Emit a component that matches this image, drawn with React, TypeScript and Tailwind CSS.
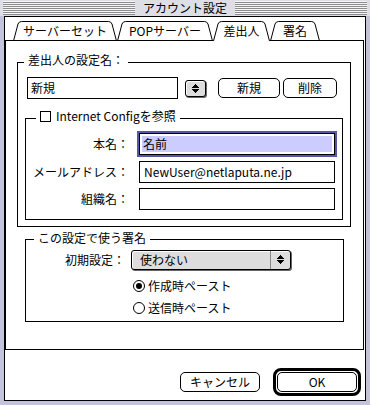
import React from "react";

function Stripes() {
  return (
    <div className="h-[14px] flex-1 bg-[image:repeating-linear-gradient(to_bottom,#f6f6f6_0px,#f6f6f6_1px,#8c8c8c_1px,#8c8c8c_2px)]" />
  );
}

function UpDown() {
  return (
    <svg width="7" height="9" viewBox="0 0 7 9" shapeRendering="crispEdges">
      <polygon points="3.5,0 7,4 0,4" fill="#000" />
      <polygon points="0,5 7,5 3.5,9" fill="#000" />
    </svg>
  );
}

function Tab({ w, label, active, className }: { w: number; label: string; active?: boolean; className: string }) {
  const d = `M0.5 20 L5 3 Q6 0.5 8.5 0.5 L${w - 8.5} 0.5 Q${w - 6} 0.5 ${w - 5} 3 L${w - 0.5} 20`;
  return (
    <div className={`relative h-[20px] flex items-center justify-center ${className}`}>
      <svg className="absolute inset-0" width={w} height={20} viewBox={`0 0 ${w} 20`}>
        <path d={d} fill="#fff" stroke="#000" />
        {!active && <path d={`M0 19.5 H${w}`} stroke="#000" />}
      </svg>
      <span className="relative">{label}</span>
    </div>
  );
}

function Button({ label, className }: { label: string; className: string }) {
  return (
    <div className={`h-[20px] border border-black rounded-[5px] bg-white flex items-center justify-center ${className}`}>
      {label}
    </div>
  );
}

function Radio({ checked, label }: { checked?: boolean; label: string }) {
  return (
    <div className="h-[16px] flex items-center gap-[3px]">
      <span className="w-[12px] h-[12px] rounded-full border border-black bg-white flex items-center justify-center">
        {checked && <span className="w-[6px] h-[6px] rounded-full bg-black" />}
      </span>
      <span>{label}</span>
    </div>
  );
}

function Row({ label, children, className }: { label: string; children: React.ReactNode; className: string }) {
  return (
    <div className={`flex items-center ${className}`}>
      <div className="w-[103px] text-right">{label}</div>
      {children}
    </div>
  );
}

export default function App() {
  return (
    <div className="w-[370px] h-[405px] bg-[#c3c3db] flex flex-col text-[12px] leading-[14px] text-black font-['Noto_Sans_CJK_JP','Noto_Sans',sans-serif]">
      {/* title bar */}
      <div className="h-[16px] flex items-center px-[3px] bg-[#dedee6]">
        <Stripes />
        <span className="px-[8px]">アカウント設定</span>
        <Stripes />
      </div>

      <div className="flex-1 mx-[4px] mb-[4px] border border-black bg-white flex flex-col">
        <div className="mr-[1px] flex flex-col">
          {/* tabs */}
          <div className="mt-[4px] flex h-[20px]">
            <div className="w-[8px] border-b border-black" />
            <Tab w={104} className="w-[104px]" label="サーバーセット" />
            <Tab w={96} className="w-[96px]" label="POPサーバー" />
            <Tab w={57} className="w-[57px]" label="差出人" active />
            <Tab w={50} className="w-[50px]" label="署名" />
            <div className="flex-1 border-b border-black" />
          </div>

          {/* panel */}
          <div className="h-[309px] border-x border-b border-black flex flex-col">
            <fieldset className="ml-[11px] mt-[12px] w-[334px] border border-black pb-[6px]">
              <legend className="ml-[6px] px-[4px] pb-[4px]">差出人の設定名：</legend>
              <div className="mt-[6px] ml-[9px] flex items-center">
                <div className="w-[151px] h-[22px] border border-black flex items-center pl-[3px]">新規</div>
                <div className="ml-[7px] w-[21px] h-[17px] border border-black rounded-[3px] bg-[#dddddd] shadow-[1px_1px_0_#666,inset_1px_1px_0_#fff] flex items-center justify-center">
                  <UpDown />
                </div>
                <Button label="新規" className="ml-[12px] w-[62px]" />
                <Button label="削除" className="ml-[3px] w-[54px]" />
              </div>

              <fieldset className="mt-[10px] ml-[7px] w-[318px] border border-black pb-[9px]">
                <legend className="ml-[10px] px-[4px] pb-[4px]">
                  <span className="inline-flex items-center gap-[5px]">
                    <span className="w-[11px] h-[11px] border border-black bg-white" />
                    <span>Internet Configを参照</span>
                  </span>
                </legend>
                <Row label="本名：" className="mt-[5px]">
                  <div className="ml-[10px] w-[196px] h-[22px] border border-black shadow-[0_0_0_2px_#5656a8] flex items-center px-[2px]">
                    <div className="flex-1 h-[16px] bg-[#ccccff] flex items-center pl-[1px]">名前</div>
                  </div>
                </Row>
                <Row label="メールアドレス：" className="mt-[6px]">
                  <div className="ml-[10px] w-[196px] h-[22px] border border-black flex items-center pl-[4px]">NewUser@netlaputa.ne.jp</div>
                </Row>
                <Row label="組織名：" className="mt-[5px]">
                  <div className="ml-[10px] w-[196px] h-[22px] border border-black" />
                </Row>
              </fieldset>
            </fieldset>

            <fieldset className="ml-[19px] mt-[4px] w-[319px] border border-black pb-[5px]">
              <legend className="ml-[8px] px-[4px] pb-[4px]">この設定で使う署名</legend>
              <div className="mt-[1px] flex items-center">
                <div className="w-[99px] text-right">初期設定：</div>
                <div className="ml-[6px] w-[160px] h-[20px] flex border border-black rounded-[3px] bg-[#dddddd] shadow-[1px_1px_0_#666,inset_1px_1px_0_#fff]">
                  <div className="flex-1 flex items-center pl-[8px] border-r border-[#888]">使わない</div>
                  <div className="w-[19px] flex items-center justify-center">
                    <UpDown />
                  </div>
                </div>
              </div>
              <div className="ml-[107px] mt-[8px]">
                <Radio checked label="作成時ペースト" />
              </div>
              <div className="ml-[107px] mt-[6px]">
                <Radio label="送信時ペースト" />
              </div>
            </fieldset>
          </div>
        </div>

        {/* dialog buttons */}
        <div className="pt-[18px] pr-[4px] flex items-center justify-end gap-[13px]">
          <Button label="キャンセル" className="w-[80px]" />
          <div className="w-[88px] h-[28px] border-[3px] border-black rounded-[8px] p-[1px] bg-white">
            <div className="h-full border border-black rounded-[5px] flex items-center justify-center">OK</div>
          </div>
        </div>
      </div>
    </div>
  );
}
